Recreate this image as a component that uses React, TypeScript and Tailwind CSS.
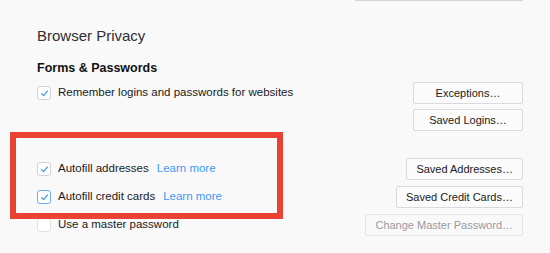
import React from "react";

function Check({ checked, focused }: { checked?: boolean; focused?: boolean }) {
  return (
    <div
      className={
        "w-[14px] h-[14px] shrink-0 rounded-[3px] bg-white border flex items-center justify-center " +
        (focused ? "border-[#6aaef6]" : checked ? "border-[#d2d2d6]" : "border-[#e2e2e5]")
      }
    >
      {checked && (
        <svg width="9" height="9" viewBox="0 0 9 9">
          <path d="M1.6 4.6 L3.6 6.6 L7.4 2.2" fill="none" stroke="#3d97f5" strokeWidth="1.3" strokeLinecap="round" strokeLinejoin="round" />
        </svg>
      )}
    </div>
  );
}

function Btn({ children, disabled }: { children: React.ReactNode; disabled?: boolean }) {
  return (
    <div
      className={
        "h-[22px] min-w-[110px] px-[9px] flex items-center justify-center rounded-[2px] border text-[11px] whitespace-nowrap " +
        (disabled
          ? "bg-[#f9f9fa] border-[#e4e4e7] text-[#9a9a9e]"
          : "bg-[#fbfbfb] border-[#dadade] text-[#1a1a1c]")
      }
    >
      {children}
    </div>
  );
}

function Row({
  checked,
  focused,
  label,
  learn,
  button,
  disabled,
  className,
}: {
  checked?: boolean;
  focused?: boolean;
  label: string;
  learn?: boolean;
  button: string;
  disabled?: boolean;
  className?: string;
}) {
  return (
    <div className={"flex items-center justify-between " + (className || "")}>
      <div className="flex items-center gap-[7px]">
        <Check checked={checked} focused={focused} />
        <span className="text-[11.5px] text-[#1a1a1c] whitespace-nowrap">{label}</span>
        {learn && <span className="ml-[1px] text-[11.5px] text-[#3c9af6] whitespace-nowrap">Learn more</span>}
      </div>
      <Btn disabled={disabled}>{button}</Btn>
    </div>
  );
}

export default function App() {
  return (
    <div className="relative w-[550px] h-[253px] bg-[#f9f9fa] overflow-hidden font-['Liberation_Sans',Arial,sans-serif]">
      <div className="flex justify-end pr-[27px]">
        <div className="w-[168px] h-px bg-[#d4d4d8]" />
      </div>
      <div className="pl-[37px] pr-[27px]">
        <h1 className="mt-[25px] text-[15px] leading-[20px] text-[#2f2f33]">Browser Privacy</h1>
        <h2 className="mt-[14px] text-[12.5px] leading-[16px] font-bold text-[#111]">Forms &amp; Passwords</h2>
        <div className="mt-[6px] flex flex-col">
          <Row checked label="Remember logins and passwords for websites" button="Exceptions…" />
          <div className="mt-[5px] flex justify-end">
            <Btn>Saved Logins…</Btn>
          </div>
          <Row className="mt-[27px]" checked learn label="Autofill addresses" button="Saved Addresses…" />
          <Row className="mt-[6px]" checked focused learn label="Autofill credit cards" button="Saved Credit Cards…" />
          <Row className="mt-[6px]" label="Use a master password" button="Change Master Password…" disabled />
        </div>
      </div>
      <div className="absolute left-[10px] top-[132px] w-[273px] h-[87px] border-[6px] border-[#ea4233]" />
    </div>
  );
}
